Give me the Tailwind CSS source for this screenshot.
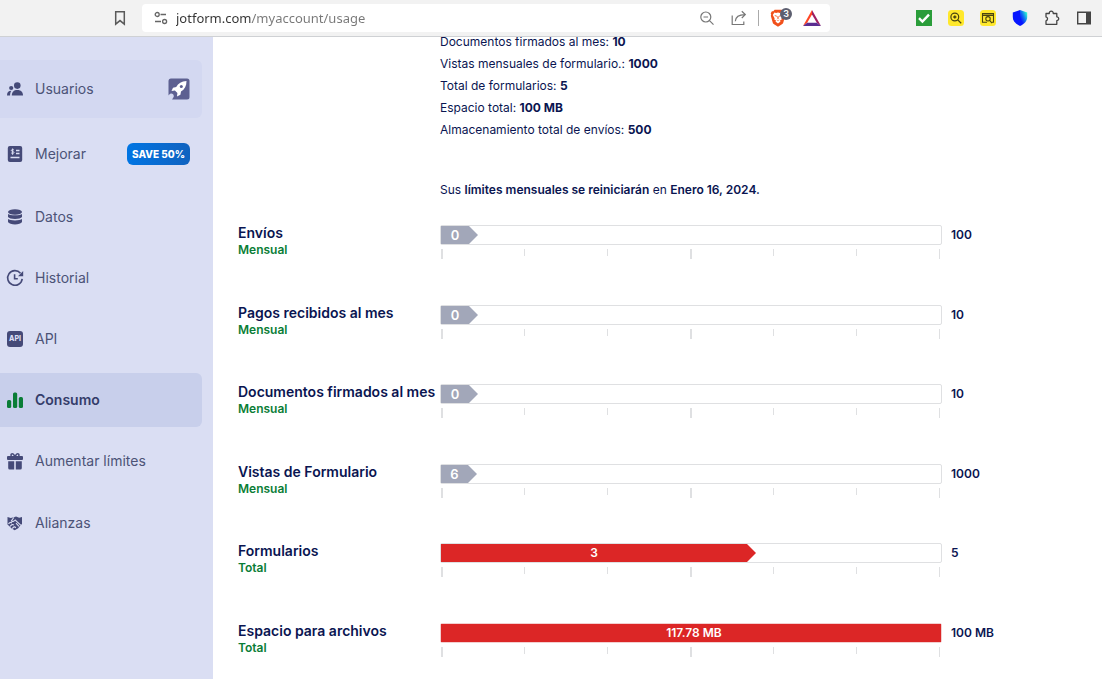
<!DOCTYPE html>
<html lang="es">
<head>
  <meta charset="UTF-8" />
  <meta name="viewport" content="width=device-width, initial-scale=1.0"/>
  <title>Consumo</title>
  <script src="https://cdn.jsdelivr.net/npm/@tailwindcss/browser@4"></script>
</head>
<body class="h-screen flex flex-col overflow-hidden bg-white text-[#0a1551] font-[Inter,sans-serif]">

  <!-- Browser toolbar -->
  <header class="relative z-10 shrink-0 h-[37px] flex items-center bg-[#f2f2f2] border-b border-[#cfd1d4] pl-28 pr-2.5">
    <button aria-label="Marcador" class="mr-3.5">
      <svg class="size-4" viewBox="0 0 16 16" fill="none" stroke="#5a5a5a" stroke-width="1.5"><path d="M3.7 1.8h8.6v12.4L8 10.6l-4.3 3.6z"/></svg>
    </button>
    <div class="flex-1 h-7 flex items-center bg-white rounded pl-3 pr-[9px]">
      <button aria-label="Información del sitio">
        <svg class="size-3.5" viewBox="0 0 14 14" fill="none" stroke="#666" stroke-width="1.3"><circle cx="3.2" cy="3.5" r="2"/><path d="M6.5 3.5H12M1 10.5h6"/><circle cx="10.6" cy="10.5" r="2"/></svg>
      </button>
      <input aria-label="Dirección" value="jotform.com/myaccount/usage" class="flex-1 min-w-0 ml-2 outline-none font-['Noto_Sans',sans-serif] text-[13px] leading-5 text-transparent bg-clip-text bg-[linear-gradient(to_right,#333_76px,#777_76px)]">
      <button aria-label="Alejar" class="mr-4">
        <svg class="size-4" viewBox="0 0 16 16" fill="none" stroke="#777" stroke-width="1.2"><circle cx="6.8" cy="7" r="5"/><path d="M4.5 7h4.6M10.5 10.7l4 4"/></svg>
      </button>
      <button aria-label="Compartir" class="mr-[11px]">
        <svg class="size-4" viewBox="0 0 16 16" fill="none" stroke="#777" stroke-width="1.2"><path d="M1.2 5.500v9h11.600v-3"/><path d="M4.300 11.200C4.600 7 7 4.600 14 4.600M10.800 1.200l3.500 3.400-3.500 3.400"/></svg>
      </button>
      <span class="w-px h-4 bg-[#aaa] mr-[11px]"></span>
      <button aria-label="Brave Shields" class="relative mr-[17px]">
        <svg class="w-4 h-[18px]" viewBox="0 0 16 18"><path fill="#f1501b" d="M4.6.8h6.8l1.3 1.5 1.4-.1 1.2 2-.5 1.5.4 1-1.9 6.9c-.3 1-.9 1.5-1.7 2L8 17.8l-3.6-2.2c-.8-.5-1.4-1-1.7-2L.8 6.7l.4-1-.5-1.5 1.2-2 1.4.1z"/><path fill="#fff" d="M4.4 3.6l1.7.3L8 3.5l1.9.4 1.7-.3 1.6 2.4-1.8 3.2.3 1.2-2 1.4.9.8L8 14.5l-2.6-1.9.9-.8-2-1.4.3-1.2L2.8 6z"/><path fill="#f1501b" d="M4.2 6l2.6.7L6.4 8zM11.8 6l-2.6.7.4 1.3zM7.6 7h.8l.3 2.4-.7.5-.7-.5zM6.4 10.6L8 11.3l1.6-.7L8 12z"/></svg>
        <span class="absolute left-2.5 -top-px size-3 rounded-full bg-[#5d5f70] text-white text-[9px] leading-3 font-semibold">3</span>
      </button>
      <button aria-label="BAT">
        <svg class="w-[18px] h-4" viewBox="0 0 18 16"><path fill="#ff4724" d="M9 0v4.5L4.2 12.8 0 16z"/><path fill="#9e1f63" d="M9 0l9 16-4.2-3.2L9 4.5z"/><path fill="#5b2d91" d="M0 16l4.2-3.2h9.6L18 16z"/></svg>
      </button>
    </div>
    <div class="flex items-center gap-4 ml-[86px]">
      <button aria-label="Verificador">
        <svg class="size-4" viewBox="0 0 16 16"><path fill="#2a9d3a" d="M0 0h16v16H0z"/><path d="M3 8.2l3.4 3.3L13 4.6" fill="none" stroke="#fff" stroke-width="2.4"/></svg>
      </button>
      <button aria-label="Lupa">
        <svg class="size-4" viewBox="0 0 16 16" fill="none" stroke="#4a4410" stroke-width="1.2"><rect width="16" height="16" rx="3.5" fill="#ffe82c" stroke="none"/><circle cx="6.8" cy="7" r="3.9"/><path d="M9.6 9.8l3.6 3.5"/><path d="M5.2 7h3.2M6.8 5.4v3.2" stroke-width="1.6"/></svg>
      </button>
      <button aria-label="Buscar en página">
        <svg class="size-4" viewBox="0 0 16 16" fill="none" stroke="#4a4410" stroke-width="1.1"><rect width="16" height="16" rx="3.5" fill="#ffe82c" stroke="none"/><path d="M7 12.2H2.5V3.6h11v8.6H12M2.5 5.4h11"/><circle cx="8" cy="8.8" r="2.2"/><path d="M9.6 10.4l2.4 2.8"/></svg>
      </button>
      <button aria-label="Escudo">
        <svg class="size-4" viewBox="0 0 16 16"><defs><linearGradient id="shield" x1="0" y1="1" x2="1" y2="0"><stop offset=".25" stop-color="#0716ff"/><stop offset=".55" stop-color="#1377f0"/><stop offset=".85" stop-color="#2ff3d0"/></linearGradient></defs><path fill="#0716ff" d="M8 0v16C3.500 13.900.8 11 .8 7V2.500z"/><path fill="url(#shield)" d="M8 0l7.200 2.500V7c0 4-2.700 6.900-7.200 9z"/></svg>
      </button>
      <button aria-label="Extensiones">
        <svg class="size-4" viewBox="0 0 16 16" fill="none" stroke="#444" stroke-width="1.3" stroke-linejoin="round"><path d="M2 3.500h3.300a2 2 0 1 1 3.900 0h3.600v3.300a1.900 1.900 0 1 1 0 3.800v3.700H2v-3.500a2 2 0 0 0 0-3.900z"/></svg>
      </button>
      <button aria-label="Barra lateral">
        <svg class="size-4" viewBox="0 0 16 16"><path d="M1.700 2.200h12.600v11.600H1.700z" fill="none" stroke="#444" stroke-width="1.400"/><path fill="#444" d="M10 2h4.500v12H10z"/></svg>
      </button>
    </div>
  </header>

  <div class="flex-1 min-h-0 flex">

    <!-- Sidebar -->
    <nav class="w-[213px] shrink-0 bg-[#dadef3] pt-[23px] pr-[11px] flex flex-col gap-[7px] text-sm text-[#4c5377]">
      <a href="#" class="h-[58px] shrink-0 flex items-center gap-3 pl-[7px] pr-3 rounded-r-md bg-[#d3d8f1]">
        <svg class="size-4" viewBox="0 0 16 16" fill="#454a78"><circle cx="10.300" cy="4.600" r="3.300"/><path d="M4.800 14.500c0-3.600 2-5.600 5.600-5.600S16 11 16 14.500z"/><circle cx="4.200" cy="7" r="2.100"/><path d="M0 14.500c0-3 1.200-4.800 4.400-4.800-1 1.300-1.300 2.800-1.300 4.800z"/></svg>
        <span class="flex-1">Usuarios</span>
        <svg class="size-[22px]" viewBox="0 0 22 22"><rect x=".5" y=".5" width="21" height="21" rx="2.500" fill="#5d6091"/><path fill="#fff" d="M18.500 3c-5 .2-8.200 2.200-10.300 6L5 9.800 3.500 13l3.400-.4 2.500 2.500-.4 3.400 3.400-1.700.6-3.300c3.700-2.200 5.500-5.500 5.500-10.500z"/><circle cx="13.300" cy="8.500" r="1.500" fill="#5d6091"/><path fill="#d3d8f1" d="M0 22v-4.500c1-.4 1.600-1.300 2.800-2 1.700-.2 3.200 1 3 3-.5 1.400-1.500 2.300-1.800 3.500z"/></svg>
      </a>
      <a href="#" class="h-[58px] shrink-0 flex items-center gap-3 pl-[7px] pr-3">
        <svg class="size-4" viewBox="0 0 16 16"><rect x=".8" width="14.400" height="16" rx="2" fill="#454a78"/><g fill="none" stroke="#dadef3" stroke-width="1.300"><path d="M9 4.500h3.500M9 7.500h3.500M3.500 11.500h9"/><path stroke-width="1" d="M6.900 4c-.5-.6-2.600-.6-2.600.5 0 1.200 2.700.7 2.700 2 0 1.200-2.300 1.100-2.900.3M5.600 2.500v6.300"/></g></svg>
        <span class="flex-1">Mejorar</span>
        <span class="h-[22px] px-[5px] rounded-md bg-linear-to-r from-[#0075e3] to-[#0f62bf] text-white text-[10px] leading-[22px] font-extrabold">SAVE 50%</span>
      </a>
      <a href="#" class="h-[54px] shrink-0 flex items-center gap-3 pl-[7px] pr-3">
        <svg class="size-4" viewBox="0 0 16 16" fill="#454a78"><ellipse cx="8" cy="3" rx="7" ry="2.800"/><path d="M1 5c1.500 1.700 12.500 1.700 14 0v3c-1.500 2.600-12.500 2.600-14 0z"/><path d="M1 10c1.500 1.900 12.500 1.900 14 0v3c-1.500 3.200-12.500 3.200-14 0z"/></svg>
        <span>Datos</span>
      </a>
      <a href="#" class="h-[54px] shrink-0 flex items-center gap-3 pl-[7px] pr-3">
        <svg class="size-4 overflow-visible" viewBox="0 0 16 16" fill="none" stroke="#454a78" stroke-width="1.600"><path d="M15.200 8.800A7.300 7.300 0 1 1 13.500 3.200"/><path d="M7.600 4.200v4.600h3.200"/><path fill="#454a78" stroke="none" d="M16.200 1v5.300h-5.200z"/></svg>
        <span>Historial</span>
      </a>
      <a href="#" class="h-[54px] shrink-0 flex items-center gap-3 pl-[7px] pr-3">
        <span aria-hidden="true" class="size-4 rounded-[3px] bg-[#454a78] text-[#dadef3] text-[7px] leading-4 font-extrabold text-center">API</span>
        <span>API</span>
      </a>
      <a href="#" aria-current="page" class="h-[54px] shrink-0 flex items-center gap-3 pl-[7px] pr-3 rounded-r-md bg-[#c8cfeb] text-[#343c6a] font-semibold">
        <svg class="size-4" viewBox="0 0 16 16" fill="#0a7d36"><rect y="8" width="4.200" height="8" rx="1.500"/><rect x="6" y=".5" width="4.200" height="15.500" rx="1.500"/><rect x="11.800" y="5" width="4.200" height="11" rx="1.500"/></svg>
        <span>Consumo</span>
      </a>
      <a href="#" class="h-[54px] shrink-0 flex items-center gap-3 pl-[7px] pr-3">
        <svg class="size-4 overflow-visible" viewBox="0 0 16 16" fill="#454a78"><rect y="3" width="16" height="4" rx="1"/><path d="M1.200 8.200h6v8.300H2.700a1.500 1.500 0 0 1-1.500-1.500zM8.800 8.200h6V15a1.500 1.500 0 0 1-1.500 1.500H8.800z"/><path fill="none" stroke="#454a78" stroke-width="1.500" d="M8 4C7 1.200 5.500.3 4.400 1.100 3.500 2 4.300 3.600 5 4M8 4c1-2.800 2.500-3.700 3.600-2.900.9.900.1 2.500-.6 2.900"/></svg>
        <span>Aumentar límites</span>
      </a>
      <a href="#" class="h-14 shrink-0 flex items-center gap-3 pl-[7px] pr-3">
        <svg class="size-4" viewBox="0 0 16 16"><path fill="#454a78" d="M.5 2l3.300 1L7 2.300 9 1.500l3.200 1.300L15 2v7l-1.800 1.600-2 2.700-3.500 1.900-3-1.700L.5 9.500z"/><g fill="none" stroke="#dadef3" stroke-width="1.100"><path d="M6.800 2.500L4.500 5.800c1 1.200 2.500.6 3.700-.8l5.500 5.200M1.500 9c1-1.700 2.300-2.200 3.400-.8M3 11.500c1.600-2 3-2.600 3.800-1.200M5.300 13.600c1.200-1.800 2.500-2.500 3.400-.7M9 8.200l3 3.200"/></g></svg>
        <span>Alianzas</span>
      </a>
    </nav>

    <!-- Usage -->
    <main class="flex-1 min-w-0 pl-[25px]">
      <ul class="-mt-1.5 pl-[202px] text-xs leading-[22px]">
        <li>Documentos firmados al mes: <b>10</b></li>
        <li>Vistas mensuales de formulario.: <b>1000</b></li>
        <li>Total de formularios: <b>5</b></li>
        <li>Espacio total: <b>100 MB</b></li>
        <li>Almacenamiento total de envíos: <b>500</b></li>
      </ul>
      <p class="mt-[38px] pl-[202px] text-xs leading-[22px]">Sus <b class="font-semibold">límites mensuales se reiniciarán</b> en <b class="font-semibold">Enero 16, 2024.</b></p>

      <div class="mt-6 text-xs font-semibold">
        <section class="odd:h-20 even:h-[79px] grid grid-cols-[202px_1fr_160px]">
          <div>
            <h2 class="text-sm leading-4 whitespace-nowrap">Envíos</h2>
            <p class="leading-[18px] text-[#0a7d36]">Mensual</p>
          </div>
          <div>
            <div class="h-5 border border-[#dfe0e2] rounded-xs">
              <div class="w-[7.4%] h-full pr-[9px] bg-[#a2a7b9] text-white text-[13px] leading-[18px] text-center [clip-path:polygon(0_0,calc(100%-9px)_0,100%_50%,calc(100%-9px)_100%,0_100%)]">0</div>
            </div>
            <div class="mt-1 ml-px mr-0.5 grid grid-cols-[repeat(6,1fr)_1px] *:border-l *:border-[#dfe0e2] *:h-[7px]">
              <i class="h-2.5! border-l-2!"></i><i></i><i></i><i class="h-2.5! border-l-2!"></i><i></i><i></i><i class="h-2.5!"></i>
            </div>
          </div>
          <p class="pl-[9px] leading-5">100</p>
        </section>

        <section class="odd:h-20 even:h-[79px] grid grid-cols-[202px_1fr_160px]">
          <div>
            <h2 class="text-sm leading-4 whitespace-nowrap">Pagos recibidos al mes</h2>
            <p class="leading-[18px] text-[#0a7d36]">Mensual</p>
          </div>
          <div>
            <div class="h-5 border border-[#dfe0e2] rounded-xs">
              <div class="w-[7.4%] h-full pr-[9px] bg-[#a2a7b9] text-white text-[13px] leading-[18px] text-center [clip-path:polygon(0_0,calc(100%-9px)_0,100%_50%,calc(100%-9px)_100%,0_100%)]">0</div>
            </div>
            <div class="mt-1 ml-px mr-0.5 grid grid-cols-[repeat(6,1fr)_1px] *:border-l *:border-[#dfe0e2] *:h-[7px]">
              <i class="h-2.5! border-l-2!"></i><i></i><i></i><i class="h-2.5! border-l-2!"></i><i></i><i></i><i class="h-2.5!"></i>
            </div>
          </div>
          <p class="pl-[9px] leading-5">10</p>
        </section>

        <section class="odd:h-20 even:h-[79px] grid grid-cols-[202px_1fr_160px]">
          <div>
            <h2 class="text-sm leading-4 whitespace-nowrap">Documentos firmados al mes</h2>
            <p class="leading-[18px] text-[#0a7d36]">Mensual</p>
          </div>
          <div>
            <div class="h-5 border border-[#dfe0e2] rounded-xs">
              <div class="w-[7.4%] h-full pr-[9px] bg-[#a2a7b9] text-white text-[13px] leading-[18px] text-center [clip-path:polygon(0_0,calc(100%-9px)_0,100%_50%,calc(100%-9px)_100%,0_100%)]">0</div>
            </div>
            <div class="mt-1 ml-px mr-0.5 grid grid-cols-[repeat(6,1fr)_1px] *:border-l *:border-[#dfe0e2] *:h-[7px]">
              <i class="h-2.5! border-l-2!"></i><i></i><i></i><i class="h-2.5! border-l-2!"></i><i></i><i></i><i class="h-2.5!"></i>
            </div>
          </div>
          <p class="pl-[9px] leading-5">10</p>
        </section>

        <section class="odd:h-20 even:h-[79px] grid grid-cols-[202px_1fr_160px]">
          <div>
            <h2 class="text-sm leading-4 whitespace-nowrap">Vistas de Formulario</h2>
            <p class="leading-[18px] text-[#0a7d36]">Mensual</p>
          </div>
          <div>
            <div class="h-5 border border-[#dfe0e2] rounded-xs">
              <div class="w-[7.2%] h-full pr-[9px] bg-[#a2a7b9] text-white text-[13px] leading-[18px] text-center [clip-path:polygon(0_0,calc(100%-9px)_0,100%_50%,calc(100%-9px)_100%,0_100%)]">6</div>
            </div>
            <div class="mt-1 ml-px mr-0.5 grid grid-cols-[repeat(6,1fr)_1px] *:border-l *:border-[#dfe0e2] *:h-[7px]">
              <i class="h-2.5! border-l-2!"></i><i></i><i></i><i class="h-2.5! border-l-2!"></i><i></i><i></i><i class="h-2.5!"></i>
            </div>
          </div>
          <p class="pl-[9px] leading-5">1000</p>
        </section>

        <section class="odd:h-20 even:h-[79px] grid grid-cols-[202px_1fr_160px]">
          <div>
            <h2 class="text-sm leading-4 whitespace-nowrap">Formularios</h2>
            <p class="leading-[18px] text-[#0a7d36]">Total</p>
          </div>
          <div>
            <div class="h-5 border border-[#dfe0e2] rounded-xs">
              <div class="w-[63%] h-full pr-[9px] bg-[#dc2626] text-white leading-[18px] text-center [clip-path:polygon(0_0,calc(100%-9px)_0,100%_50%,calc(100%-9px)_100%,0_100%)]">3</div>
            </div>
            <div class="mt-1 ml-px mr-0.5 grid grid-cols-[repeat(6,1fr)_1px] *:border-l *:border-[#dfe0e2] *:h-[7px]">
              <i class="h-2.5! border-l-2!"></i><i></i><i></i><i class="h-2.5! border-l-2!"></i><i></i><i></i><i class="h-2.5!"></i>
            </div>
          </div>
          <p class="pl-[9px] leading-5">5</p>
        </section>

        <section class="odd:h-20 even:h-[79px] grid grid-cols-[202px_1fr_160px]">
          <div>
            <h2 class="text-sm leading-4 whitespace-nowrap">Espacio para archivos</h2>
            <p class="leading-[18px] text-[#0a7d36]">Total</p>
          </div>
          <div>
            <div class="h-5 border border-[#f3cfd0] rounded-xs">
              <div class="w-full h-full pl-1.5 bg-[#dc2626] text-white leading-[18px] text-center">117.78 MB</div>
            </div>
            <div class="mt-1 ml-px mr-0.5 grid grid-cols-[repeat(6,1fr)_1px] *:border-l *:border-[#dfe0e2] *:h-[7px]">
              <i class="h-2.5! border-l-2!"></i><i></i><i></i><i class="h-2.5! border-l-2!"></i><i></i><i></i><i class="h-2.5!"></i>
            </div>
          </div>
          <p class="pl-[9px] leading-5">100 MB</p>
        </section>
      </div>
    </main>
  </div>
</body>
</html>
